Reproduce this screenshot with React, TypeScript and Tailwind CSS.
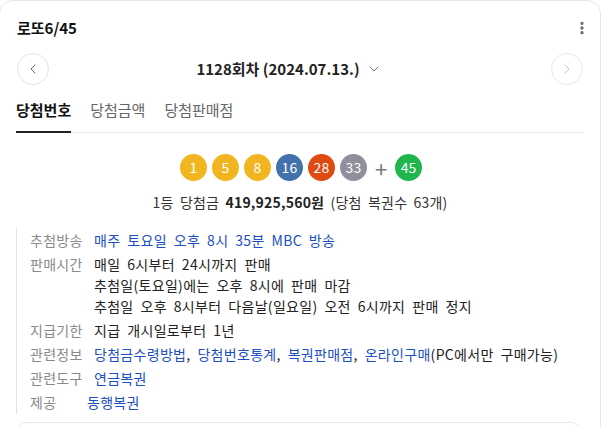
import { ChevronLeft, ChevronRight, ChevronDown, MoreVertical } from 'lucide-react';

const balls = [
  { n: 1, c: 'bg-[#f1b61f]' },
  { n: 5, c: 'bg-[#f1b61f]' },
  { n: 8, c: 'bg-[#f1b61f]' },
  { n: 16, c: 'bg-[#4271ab]' },
  { n: 28, c: 'bg-[#dd4a12]' },
  { n: 33, c: 'bg-[#8f909b]' },
];

function Ball({ n, c }: { n: number; c: string }) {
  return (
    <div className={`w-[27px] h-[27px] rounded-full ${c} text-white text-[14px] flex items-center justify-center`}>
      {n}
    </div>
  );
}

function Row({ label, w = 'w-[64px]', children }: { label: string; w?: string; children: React.ReactNode }) {
  return (
    <div className="flex py-[1.5px]">
      <div className={`${w} shrink-0 text-[#8a8a8a]`}>{label}</div>
      <div>{children}</div>
    </div>
  );
}

export default function App() {
  return (
    <div
      className="w-[606px] h-[427px] overflow-hidden bg-white text-[#222]"
      style={{ fontFamily: '"Noto Sans CJK KR", "Noto Sans", sans-serif' }}
    >
      <div className="w-[602px] -ml-px border border-[#e6e6e6] rounded-[14px] pt-[14px]">
        <div className="flex items-center justify-between pl-[17px] pr-[10px] h-[26px]">
          <h1 className="text-[15px] font-bold text-[#111]">로또6/45</h1>
          <MoreVertical className="w-4 h-4 text-[#666]" strokeWidth={3} />
        </div>

        <div className="flex items-center justify-between px-[17px] mt-[12px]">
          <button className="w-8 h-8 rounded-full border border-[#e2e2e2] flex items-center justify-center">
            <ChevronLeft className="w-4 h-4 text-[#666]" strokeWidth={1.5} />
          </button>
          <div className="flex items-center gap-[6px] mr-[22px] text-[15px] font-semibold text-[#222]">
            1128회차 (2024.07.13.)
            <ChevronDown className="w-4 h-4 text-[#777]" strokeWidth={1.5} />
          </div>
          <button className="w-8 h-8 rounded-full border border-[#e8e8e8] flex items-center justify-center">
            <ChevronRight className="w-4 h-4 text-[#c8c8c8]" strokeWidth={1.5} />
          </button>
        </div>

        <div className="mx-[16px] mt-[15px] flex gap-[19px] text-[15px] leading-[20px] border-b border-[#ececec]">
          <div className="font-bold text-[#111] pb-[11px] border-b-2 border-[#222] -mb-px">당첨번호</div>
          <div className="text-[#666] pb-[11px]">당첨금액</div>
          <div className="text-[#666] pb-[11px]">당첨판매점</div>
        </div>

        <div className="flex items-center justify-center gap-[5px] mt-[21px] pl-[2px]">
          {balls.map((b) => (
            <Ball key={b.n} n={b.n} c={b.c} />
          ))}
          <span className="text-[22px] text-[#777] mx-[3px] leading-none">+</span>
          <Ball n={45} c="bg-[#1fb64d]" />
        </div>

        <p className="text-center text-[14px] mt-[11px] text-[#333] [word-spacing:3px] tracking-[0.2px]">
          1등 당첨금 <b className="font-semibold text-[#222]">419,925,560원</b> (당첨 복권수 63개)
        </p>

        <div className="ml-[16px] mt-[15px] border-l border-[#e4e4e4] pl-[13px] text-[14px] leading-[21px] text-[#222] [word-spacing:3.5px] tracking-[0.3px]">
          <Row label="추첨방송">
            <span className="text-[#1b4fc2]">매주 토요일 오후 8시 35분 MBC 방송</span>
          </Row>
          <Row label="판매시간">
            <div>매일 6시부터 24시까지 판매</div>
            <div>추첨일(토요일)에는 오후 8시에 판매 마감</div>
            <div>추첨일 오후 8시부터 다음날(일요일) 오전 6시까지 판매 정지</div>
          </Row>
          <Row label="지급기한">지급 개시일로부터 1년</Row>
          <Row label="관련정보">
            <span className="text-[#1b4fc2]">당첨금수령방법</span>,{' '}
            <span className="text-[#1b4fc2]">당첨번호통계</span>,{' '}
            <span className="text-[#1b4fc2]">복권판매점</span>,{' '}
            <span className="text-[#1b4fc2]">온라인구매</span>(PC에서만 구매가능)
          </Row>
          <Row label="관련도구">
            <span className="text-[#1b4fc2]">연금복권</span>
          </Row>
          <Row label="제공" w="w-[57px]">
            <span className="text-[#1b4fc2]">동행복권</span>
          </Row>
        </div>

        <div className="mx-[17px] mr-[19px] mt-[8px] h-[40px] border border-[#e6e6e6] rounded-[10px]" />
      </div>
    </div>
  );
}
